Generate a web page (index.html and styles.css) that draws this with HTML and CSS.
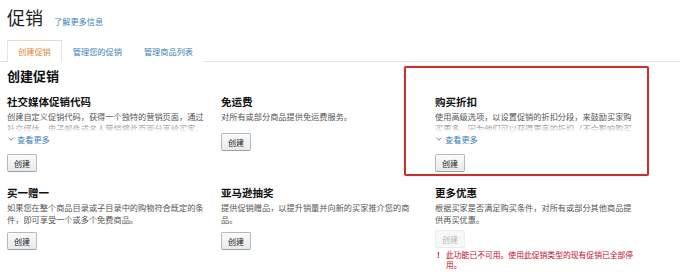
FILE: index.html
```html
<!DOCTYPE html>
<html lang="zh-CN">
<head>
  <meta charset="UTF-8" />
  <meta name="viewport" content="width=device-width, initial-scale=1.0" />
  <title>促销</title>
  <link rel="stylesheet" href="styles.css">
</head>
<body>
  <div class="page">
    <div class="header">
      <h1>促销</h1>
      <a class="learn-more" href="#">了解更多信息</a>
    </div>

    <!-- Tabs -->
    <div class="tabs">
      <div class="tab active">创建促销</div>
      <div class="tab">管理您的促销</div>
      <div class="tab">管理商品列表</div>
    </div>

    <h2 class="section-title">创建促销</h2>

    <div class="promo-grid">
      <div class="promo">
        <h3>社交媒体促销代码</h3>
        <p class="desc clipped">创建自定义促销代码，获得一个独特的营销页面，通过社交媒体、电子邮件或名人营销将此页面分享给买家。</p>
        <a class="see-more" href="#"><svg width="6" height="4" viewBox="0 0 6 4"><polyline points="0.5,0.8 3,3.2 5.5,0.8" fill="none" stroke="#7a8794" stroke-width="1"/></svg>查看更多</a>
        <button class="btn btn-tall">创建</button>
      </div>

      <div class="promo">
        <h3>免运费</h3>
        <p class="desc">对所有或部分商品提供免运费服务。</p>
        <button class="btn btn-short">创建</button>
      </div>

      <div class="promo highlighted">
        <h3>购买折扣</h3>
        <p class="desc clipped">使用高级选项，以设置促销的折扣分段，来鼓励买家购买更多，因为他们可以获得更高的折扣（不会影响购买数量）。</p>
        <a class="see-more" href="#"><svg width="6" height="4" viewBox="0 0 6 4"><polyline points="0.5,0.8 3,3.2 5.5,0.8" fill="none" stroke="#7a8794" stroke-width="1"/></svg>查看更多</a>
        <button class="btn btn-tall">创建</button>
      </div>

      <div class="promo">
        <h3>买一赠一</h3>
        <p class="desc">如果您在整个商品目录或子目录中的购物符合既定的条件，即可享受一个或多个免费商品。</p>
        <button class="btn">创建</button>
      </div>

      <div class="promo">
        <h3>亚马逊抽奖</h3>
        <p class="desc">提供促销赠品，以提升销量并向新的买家推介您的商品。</p>
        <button class="btn">创建</button>
      </div>

      <div class="promo">
        <h3>更多优惠</h3>
        <p class="desc">根据买家是否满足购买条件，对所有或部分其他商品提供再买优惠。</p>
        <button class="btn btn-disabled" disabled>创建</button>
        <div class="error"><span class="error-icon">!</span><span>此功能已不可用。使用此促销类型的现有促销已全部停用。</span></div>
      </div>
    </div>
  </div>
</body>
</html>
```

FILE: styles.css
```css
html, body {
  margin: 0;
  padding: 0;
  background-color: #fff;
  font-family: "Noto Sans CJK SC", "Noto Sans", sans-serif;
  color: #111;
  overflow: hidden;
}

.page {
  padding: 5px 7px 0;
}

.header {
  display: flex;
  align-items: baseline;
  gap: 11px;
  height: 24px;
}

.header h1 {
  margin: 0;
  font-size: 18px;
  line-height: 24px;
  font-weight: normal;
  color: #222;
}

.learn-more {
  font-size: 8.2px;
  color: #3d7fb8;
  text-decoration: none;
}

.tabs {
  display: flex;
  margin: 11px -7px 0;
  padding: 0 7px;
  border-bottom: 1px solid #e3e3e3;
}

.tab {
  font-size: 8.2px;
  line-height: 20px;
  padding: 0 10px;
  color: #3d7fb8;
  border: 1px solid transparent;
  border-bottom: none;
  margin-bottom: -1px;
  background: #fff;
}

.tab.active {
  color: #e0843a;
  border-color: #e6e6e6;
  border-top-color: #f0d9c4;
  padding-bottom: 1px;
}

.section-title {
  margin: 6px 0 0;
  font-size: 13px;
  line-height: 16px;
  font-weight: bold;
}

.promo-grid {
  display: grid;
  grid-template-columns: 200px 200px 200px;
  column-gap: 14px;
  row-gap: 14px;
  margin-top: 11px;
}

.promo {
  position: relative;
  display: flex;
  flex-direction: column;
  align-items: flex-start;
}

.promo h3 {
  margin: 0;
  font-size: 10.5px;
  line-height: 14px;
  font-weight: bold;
}

.desc {
  margin: 1px 0 0;
  font-size: 8.2px;
  line-height: 12px;
  color: #555;
}

.desc.clipped {
  height: 22px;
  overflow: hidden;
  position: relative;
}

.desc.clipped::after {
  content: "";
  position: absolute;
  left: 0;
  right: 0;
  bottom: 0;
  height: 7px;
  background: linear-gradient(rgba(255, 255, 255, 0.2), #fff);
}

.see-more {
  display: flex;
  align-items: center;
  gap: 3px;
  margin-top: 1px;
  padding-left: 1px;
  font-size: 8.2px;
  line-height: 12px;
  color: #3d7fb8;
  text-decoration: none;
}

.btn {
  margin-top: 7px;
  height: 18px;
  padding: 0 6px;
  font-family: inherit;
  font-size: 8px;
  color: #222;
  background: linear-gradient(#f9fafb, #e8eaed);
  border: 1px solid #b5b8bd;
  border-bottom-color: #9b9ea3;
  border-radius: 2px;
  box-shadow: inset 0 1px 0 rgba(255, 255, 255, 0.7);
}

.btn-tall {
  margin-top: 9px;
}

.btn-short {
  margin-top: 11px;
}

.btn-disabled {
  margin-top: 5px;
  color: #b8b8b8;
  background: #f7f7f7;
  border-color: #ececec;
  box-shadow: none;
}

/* annotation box drawn over the screenshot */
.highlighted::before {
  content: "";
  position: absolute;
  left: -31px;
  top: -29px;
  width: 241px;
  height: 106px;
  border: 2px solid #c9302c;
  border-radius: 2px;
  box-shadow: 0 0 1px rgba(201, 48, 44, 0.5);
  pointer-events: none;
}

.error {
  display: flex;
  gap: 6px;
  margin-top: 2px;
  padding-left: 2px;
  font-size: 7.8px;
  line-height: 10px;
  color: #c40a2a;
  width: 202px;
}

.error-icon {
  font-weight: bold;
  width: 3px;
  flex: none;
}
```
